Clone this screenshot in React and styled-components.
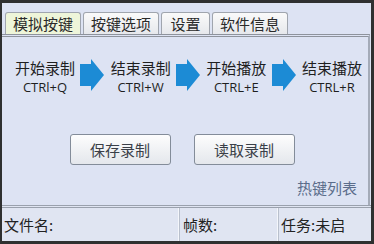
import React from 'react';
import styled, { createGlobalStyle } from 'styled-components';

const GlobalStyle = createGlobalStyle`
    body {
        margin: 0;
        background: #2d2d2d;
        font-family: "Noto Sans CJK SC", "Noto Sans", sans-serif;
    }
`;

const Frame = styled.div`
    width: 374px;
    height: 244px;
    box-sizing: border-box;
    border-style: solid;
    border-color: #2f3030;
    border-width: 3px 3px 3px 2px;
    background: #dde3f3;
    display: flex;
    flex-direction: column;
`;

const TabBar = styled.div`
    display: flex;
    gap: 2px;
    padding: 9px 0 0 3px;
    height: 22px;
`;

const Tab = styled.div`
    min-width: 49px;
    box-sizing: border-box;
    padding: 0 7px;
    height: 22px;
    display: flex;
    align-items: center;
    justify-content: center;
    font-size: 15px;
    line-height: 22px;
    color: #2a2a2a;
    border: 1px solid #a0a5ae;
    border-bottom: none;
    border-radius: 3px 3px 0 0;
    background: ${(p) =>
        p.active
            ? '#eef5d9'
            : 'linear-gradient(#fafafa, #e6e8ec)'};
`;

const Panel = styled.div`
    flex: 1;
    display: flex;
    flex-direction: column;
    border-top: 3px double #8e939c;
    border-right: 2px solid #a4abb8;
    margin-right: 1px;
`;

const Flow = styled.div`
    display: flex;
    align-items: flex-start;
    justify-content: space-between;
    padding: 20px 6px 0 13px;
`;

const Step = styled.div`
    width: 60px;
    display: flex;
    flex-direction: column;
    align-items: center;
    color: #1f1f1f;
`;

const StepTitle = styled.div`
    font-size: 15px;
    line-height: 22px;
    white-space: nowrap;
`;

const Hotkey = styled.div`
    font-family: "Open Sans", "Noto Sans", sans-serif;
    font-size: 13px;
    line-height: 18px;
    margin-top: -1px;
    white-space: nowrap;
`;

const ArrowIcon = styled.svg`
    margin-top: 2px;
    flex-shrink: 0;
`;

const Actions = styled.div`
    display: flex;
    justify-content: center;
    gap: 23px;
    padding-right: 6px;
    margin-top: 38px;
`;

const Button = styled.button`
    width: 101px;
    height: 31px;
    border: 1px solid #838c99;
    border-radius: 3px;
    background: linear-gradient(#fdfdfd, #e4e7ec);
    font-family: "Noto Sans CJK SC", sans-serif;
    font-size: 15px;
    color: #3a3f48;
    padding: 0;
`;

const LinkRow = styled.div`
    display: flex;
    justify-content: flex-end;
    padding-right: 11px;
    margin-top: 14px;
`;

const Link = styled.span`
    font-size: 15px;
    line-height: 18px;
    color: #5b6d8b;
`;

const StatusBar = styled.div`
    height: 33px;
    display: flex;
    align-items: center;
    border-top: 3px double #9aa1ad;
    background: #e0e5f2;
`;

const Cell = styled.div`
    height: 100%;
    display: flex;
    align-items: center;
    box-sizing: border-box;
    width: ${(p) => p.width}px;
    padding-left: ${(p) => p.pad}px;
    font-size: 15px;
    color: #222;
    border-right: ${(p) => (p.last ? 'none' : '1px solid #f4f6fb')};
    box-shadow: ${(p) => (p.last ? 'none' : '1px 0 0 #b9c0cd')};
`;

const Arrow = () => (
    <ArrowIcon width="25" height="32" viewBox="0 0 25 32">
        <polygon
            points="0,5 11,5 11,0 24,16 11,32 11,27 0,27"
            fill="#1c8bd5"
        />
    </ArrowIcon>
);

const steps = [
    { title: '开始录制', key: 'CTRl+Q' },
    { title: '结束录制', key: 'CTRl+W' },
    { title: '开始播放', key: 'CTRL+E' },
    { title: '结束播放', key: 'CTRL+R' }
];

const App = () => {
    return (
        <>
            <GlobalStyle />
            <Frame>
                <TabBar>
                    <Tab active>模拟按键</Tab>
                    <Tab>按键选项</Tab>
                    <Tab>设置</Tab>
                    <Tab>软件信息</Tab>
                </TabBar>
                <Panel>
                    <Flow>
                        {steps.map((s, i) => (
                            <React.Fragment key={s.title}>
                                <Step>
                                    <StepTitle>{s.title}</StepTitle>
                                    <Hotkey>{s.key}</Hotkey>
                                </Step>
                                {i < steps.length - 1 && <Arrow />}
                            </React.Fragment>
                        ))}
                    </Flow>
                    <Actions>
                        <Button>保存录制</Button>
                        <Button>读取录制</Button>
                    </Actions>
                    <LinkRow>
                        <Link>热键列表</Link>
                    </LinkRow>
                </Panel>
                <StatusBar>
                    <Cell width={177} pad={2}>文件名:</Cell>
                    <Cell width={99} pad={4}>帧数:</Cell>
                    <Cell last width={92} pad={3}>任务:未启</Cell>
                </StatusBar>
            </Frame>
        </>
    );
};

export default App;
